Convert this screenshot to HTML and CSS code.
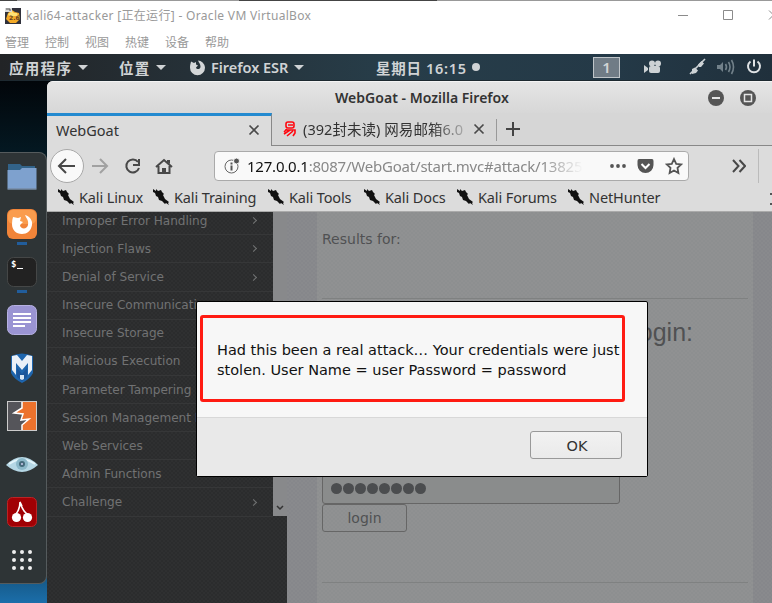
FILE: index.html
```html
<!DOCTYPE html>
<html lang="zh-CN">
<head>
<meta charset="utf-8">
<title>kali64-attacker</title>
<link rel="stylesheet" href="styles.css">
</head>
<body>
<svg width="0" height="0" class="defs">
  <symbol id="kali" viewBox="0 0 18 18"><path d="M1 1l3 2V1l2 2 3-1 1 2 2 2-1 1 2 4 4 3-1 1 1 2-3-2-1 1-3-3-3-1-1-3-2-1-1-3-2-1z" fill="#111"/></symbol>
  <symbol id="close" viewBox="0 0 12 12"><path d="M1.500 1.500l9 9M10.500 1.500l-9 9" stroke="#4a4a4a" stroke-width="1.700" fill="none"/></symbol>
</svg>
<div class="screen">
  <div class="behind"></div>
  <header class="vm-title">
    <svg class="vm-icon" width="16" height="16" viewBox="0 0 16 16"><rect width="16" height="16" fill="#30313b"/><path d="M3 5l4-3 3 2 4 1 1 6-4 4H5l-4-4z" fill="#f3aa28"/><path d="M3 6l4-3 2 2 3 0 1 3H4z" fill="#ffe174"/><path d="M0 0h7v4H0z" fill="#d9d9d9"/><path d="M1 1h4v2" stroke="#555" fill="none"/><text x="4" y="12" class="vm-num">2.6</text></svg>
    <span class="vm-name">kali64-attacker [正在运行] - Oracle VM VirtualBox</span>
    <svg class="vm-ctl" width="100" height="16" viewBox="0 0 100 16"><path d="M6 7.500h10M51.500 2.500h9v9h-9zM97 2.500l9 9M97 11.500l9-9" stroke="#8b8b8b" fill="none"/></svg>
  </header>
  <nav class="vm-menu"><span>管理</span><span>控制</span><span>视图</span><span>热键</span><span>设备</span><span>帮助</span></nav>
  <div class="panel">
    <span class="p-apps">应用程序</span><i class="caret"></i>
    <span class="p-places">位置</span><i class="caret"></i>
    <svg class="p-fox" width="17" height="17" viewBox="0 0 17 17"><path d="M2 2.500l3 1.500 2-1 0 2.500 2 1-2 2c.5 2.500 4.500 2 4.500-.8C11.500 5 10 4 9 1.500c3 .2 7 3 7 7.300a7.500 7.500 0 0 1-15 0C1 6 1.500 5 2 2.500z" fill="#d3d6d8"/></svg>
    <span class="p-esr">Firefox ESR</span><i class="caret"></i>
    <span class="p-clock">星期日 16:15</span><i class="dot"></i>
    <span class="workspace">1</span>
    <svg class="tray" width="124" height="20" viewBox="0 0 124 20">
      <g fill="#cdd2d5"><circle cx="8" cy="6.500" r="3"/><circle cx="14" cy="6.500" r="3"/><rect x="5" y="9" width="11" height="7" rx="2"/><path d="M0 8l4 3v2l-4 3z"/><path d="M46 17l15-15" stroke="#cdd2d5" stroke-width="1.600"/><path d="M48 12l3-1.500 3 3-2 2.500-4 1zM54 7.500l3.500-3.500 2.500 2.500-3 3.500-2 0z"/></g>
      <g fill="none" stroke="#72818a" stroke-width="1.600"><path d="M81.500 7q2 3 0 6M84.500 5q3 5 0 10M87.500 3q4 7 0 14"/><path d="M73 8h3l3-3v10l-3-3h-3z" fill="#72818a" stroke="none"/></g>
      <g fill="none" stroke="#e0e3e5" stroke-width="2"><path d="M106.500 4.500a6 6 0 1 0 7 0M110 2.500v7"/></g>
    </svg>
  </div>
  <main class="desktop">
    <aside class="dock">
      <svg width="30" height="30" viewBox="0 0 30 30"><path d="M1 3h12l2 2h13v5H1z" fill="#326389"/><path d="M1 9h12l2-2h14.500v20.500H.5V9z" fill="#7ea1ce"/><path d="M.5 28h29" stroke="#9ab7dc"/></svg>
      <svg width="30" height="30" viewBox="0 0 30 30"><rect width="30" height="30" rx="6" fill="#f18439"/><rect x="1" y="1" width="28" height="14" rx="5" fill="#fa9c4d"/><path d="M6 8l5 1 3-1-1 4 3 1-3 3c0 4 7 5 8 0 1-5-2-7-3-10 4 1 8 5 7 10-1 6-5 9-10 9-6 0-10-4-10-10q0-4 1-7z" fill="#fff"/><path d="M10 34.500h10" stroke="#215d9c" stroke-width="3"/></svg>
      <svg width="30" height="30" viewBox="0 0 30 30"><rect x=".5" y=".5" width="29" height="29" rx="6" fill="#222" stroke="#454747"/><text x="4" y="10" class="term-mark">$</text><path d="M10 11.500h6" stroke="#fff"/><path d="M10 34.500h10" stroke="#215d9c" stroke-width="3"/></svg>
      <svg width="30" height="30" viewBox="0 0 30 30"><rect x=".5" y=".5" width="29" height="29" rx="6" fill="#9a94d3" stroke="#b6b1e2"/><path d="M6 9h18M6 13h18M6 17h18M6 21h12" stroke="#fff" stroke-width="2"/></svg>
      <svg width="30" height="30" viewBox="0 0 30 30"><path d="M4 3q11-5 22 0v17q-3 6-11 10Q7 26 4 20z" fill="#1e65ad"/><path d="M5 3l5-1 5 6 5-6 5 1v14l-4 5V10l-6 7-6-7v12l-4-5z" fill="#eaf0f8"/><path d="M10 15l5 6 5-6v9l-5 4-5-4z" fill="#1b559a"/><path d="M13 22h4v4l-2 1-2-1z" fill="#d7e6f5"/></svg>
      <svg width="30" height="30" viewBox="0 0 30 30"><rect x=".5" y=".5" width="29" height="29" fill="#55555a"/><path d="M15 1h14v28H15v-5l7-6-8 1 2-6-9-1 8-5z" fill="#ec722d"/><path d="M15 1v6L7 12l9 1-2 6 8-1-7 6v5" fill="none" stroke="#fff" stroke-width="1.500"/><rect x=".5" y=".5" width="29" height="29" fill="none" stroke="#ccc"/></svg>
      <svg width="32" height="30" viewBox="0 0 32 30"><path d="M0 16Q8 8 16 8t16 8q-8 7-16 7T0 16z" fill="#b5d7e5"/><path d="M3 15q13-9 26 0" stroke="#e3f4fa" stroke-width="2" fill="none"/><circle cx="16" cy="15" r="6" fill="#8bb8c9"/><circle cx="16" cy="15" r="3" fill="#456a7c"/><circle cx="16" cy="15" r="1" fill="#cce"/></svg>
      <svg width="30" height="30" viewBox="0 0 30 30"><rect x=".5" y=".5" width="29" height="29" rx="5" fill="#a10004" stroke="#bb2426"/><circle cx="9.500" cy="20.500" r="4.600" fill="#fff"/><circle cx="20.500" cy="20.500" r="4.600" fill="#fff"/><path d="M9 17q4-5 4-12 2 8 7 12M13 5l2 4" stroke="#fff" stroke-width="1.600" fill="none"/></svg>
      <svg width="30" height="30" viewBox="0 0 30 30"><g fill="#eee"><circle cx="7" cy="7" r="2"/><circle cx="15" cy="7" r="2"/><circle cx="23" cy="7" r="2"/><circle cx="7" cy="15" r="2"/><circle cx="15" cy="15" r="2"/><circle cx="23" cy="15" r="2"/><circle cx="7" cy="23" r="2"/><circle cx="15" cy="23" r="2"/><circle cx="23" cy="23" r="2"/></g></svg>
    </aside>
    <section class="firefox">
      <div class="ff-title"><b>WebGoat - Mozilla Firefox</b>
        <svg width="48" height="16" viewBox="0 0 48 16"><circle cx="8" cy="8" r="8" fill="#555"/><path d="M4 8h8" stroke="#e5e5e5" stroke-width="2"/><circle cx="40" cy="8" r="8" fill="#555"/><path d="M36.500 4.500h7v7h-7z" stroke="#e5e5e5" stroke-width="1.500" fill="none"/></svg>
      </div>
      <div class="tabs">
        <div class="tab active"><span>WebGoat</span><svg width="12" height="12"><use href="#close"/></svg></div>
        <div class="tab other"><svg class="fav" width="14" height="16" viewBox="0 0 14 16"><g fill="none" stroke="#ff0810" stroke-width="1.600"><rect x="3" y="1" width="8" height="6" rx="2"/><path d="M5 4h5M2 9h10v3l-2 3M7 9l-6 4M10 10l-6 5M4 8l-3 3"/></g></svg><span class="mail">(392封未读) 网易邮箱6.0</span><svg width="12" height="12"><use href="#close"/></svg></div>
        <div class="newtab"><svg width="14" height="14" viewBox="0 0 14 14"><path d="M7 0v14M0 7h14" stroke="#444" stroke-width="2"/></svg></div>
      </div>
      <div class="nav">
        <svg class="nav-icons" width="167" height="40" viewBox="0 0 167 40"><circle cx="20" cy="20" r="16.500" fill="#f9f9f9" stroke="#a8a8a8"/><g fill="none" stroke="#484848" stroke-width="2"><path d="M28 20H13M19 13l-7 7 7 7"/><path d="M45 20h15M53 13l7 7-7 7" stroke="#a1a1a1"/><path d="M91 16a6.500 6.500 0 1 0 1 6M92 13v6h-6"/><path d="M109 21l8-7 8 7M111.500 20v7h11v-7"/></g><path d="M115 27v-5h4v5" fill="#484848"/><path d="M120 14h3v4l-3-2z" fill="#484848"/></svg>
        <div class="url">
          <svg width="17" height="18" viewBox="0 0 17 18"><circle cx="7.500" cy="9.500" r="6.500" fill="none" stroke="#666"/><path d="M7.500 8.500v5M7.500 5.500v2" stroke="#555" stroke-width="2"/><circle cx="12.500" cy="4" r="3" fill="#555" stroke="#f9f9f9"/></svg>
          <span class="address"><em>127.0.0.1</em>:8087/WebGoat/start.mvc#attack/13825</span>
          <svg class="url-icons" width="76" height="18" viewBox="0 0 76 18"><g fill="#555"><circle cx="3" cy="9" r="1.900"/><circle cx="9" cy="9" r="1.900"/><circle cx="15" cy="9" r="1.900"/><path d="M29 2h14q1.500 0 1.500 2v4a8 8 0 0 1-16 0V4q0-2 1.500-2z"/></g><path d="M32.500 7l4 4 4-4" stroke="#fff" stroke-width="2" fill="none"/><path d="M65 2l2.200 4.800 5 .6-3.700 3.500.9 5.100-4.400-2.500-4.400 2.500.9-5.100-3.700-3.500 5-.6z" stroke="#555" stroke-width="1.800" fill="none"/></svg>
        </div>
        <svg class="more" width="14" height="14" viewBox="0 0 14 14"><path d="M1 1l5.500 6L1 13M7.500 1l5.500 6-5.500 6" fill="none" stroke="#484848" stroke-width="2"/></svg>
        <i class="divider"></i>
      </div>
      <div class="bookmarks">
        <span class="w1"><svg><use href="#kali"/></svg>Kali Linux</span><span class="w2"><svg><use href="#kali"/></svg>Kali Training</span><span class="w3"><svg><use href="#kali"/></svg>Kali Tools</span><span class="w4"><svg><use href="#kali"/></svg>Kali Docs</span><span class="w5"><svg><use href="#kali"/></svg>Kali Forums</span><span class="w6"><svg><use href="#kali"/></svg>NetHunter</span>
        <b class="overflow"></b>
      </div>
      <div class="page">
        <div class="sidebar">
          <div class="lessons">
            <div>Improper Error Handling<i></i></div><div>Injection Flaws<i></i></div><div>Denial of Service<i></i></div><div>Insecure Communication<i></i></div><div>Insecure Storage<i></i></div><div>Malicious Execution<i></i></div><div>Parameter Tampering<i></i></div><div>Session Management Flaws<i></i></div><div>Web Services<i></i></div><div>Admin Functions<i></i></div><div>Challenge<i></i></div>
          </div>
          <div class="scroll"><svg width="8" height="6" viewBox="0 0 8 6"><path d="M1 1l3 3 3-3" stroke="#333" stroke-width="1.500" fill="none"/></svg></div>
        </div>
        <div class="content">
          <p>Results for:</p>
          <hr>
          <h2>login:</h2>
          <div class="password"><i></i><i></i><i></i><i></i><i></i><i></i><i></i><i></i></div>
          <button class="login">login</button>
          <hr class="second">
        </div>
      </div>
    </section>
  </main>
  <div class="dialog">
    <div class="message"><div class="highlight">Had this been a real attack… Your credentials were just<br><span>stolen. User Name = user Password = password</span></div></div>
    <div class="actions"><button>OK</button></div>
  </div>
</div>
</body>
</html>
```
FILE: styles.css
```css
* { box-sizing: border-box; }
body { margin: 0; }
svg { display: block; flex: none; }
.defs { position: absolute; }
.screen { position: relative; width: 772px; height: 603px; overflow: hidden; background: #fff; font-family: "Noto Sans", "Noto Sans CJK SC", sans-serif; white-space: nowrap; }
.behind { height: 1px; background: linear-gradient(90deg, #444 17px, #999 17px 239px, #444 239px 437px, #999 437px); }
.vm-title { height: 29px; display: flex; align-items: center; padding-left: 5px; }
.vm-num { font: bold 6px "DejaVu Sans", sans-serif; fill: #613d22; }
.vm-name { margin-left: 5px; font-size: 12px; color: #999; letter-spacing: .32px; padding-bottom: 1px; }
.vm-ctl { margin-left: auto; }
.vm-menu { height: 24px; display: flex; padding: 0 5px; font: 12px/24px "Noto Sans CJK SC", sans-serif; color: #999; }
.vm-menu span { width: 40px; }
.panel { height: 27px; display: flex; align-items: center; padding-left: 9px; background: linear-gradient(90deg, #222426, #253037 24%, #273d49 50%, #243947 80%, #20303c); color: #d0d3d5; font-size: 15px; font-weight: 600; border-bottom: 1px solid #1d2930; }
.caret { width: 0; border: 5px solid transparent; border-top-color: #d0d3d5; border-bottom: 0; }
.p-apps { width: 69px; }
.p-places { width: 37px; margin-left: 31px; }
.p-apps, .p-places { font-size: 14.5px; letter-spacing: 1.3px; }
.p-fox { margin-left: 23px; }
.p-esr { width: 83px; margin-left: 5px; font-size: 14.5px; letter-spacing: -.05px; }
.p-clock { width: 94px; margin-left: 72px; font-size: 14.500px; letter-spacing: .7px; }
.dot { width: 8px; height: 8px; border-radius: 50%; background: #d0d3d5; margin-left: 2px; }
.workspace { width: 27px; height: 21px; margin-left: 113px; border: 1px solid #bfc5c9; background: #707c86; text-align: center; line-height: 19px; }
.tray { margin-left: 24px; }
.desktop { height: 522px; display: flex; background: linear-gradient(#02060a, #041923 75px, #14527c 490px, #1b6eaa); }
.dock { flex: none; width: 47px; height: 432px; margin-top: 71px; padding-top: 8px; background: #2e3436; border: 1px solid #555b5d; border-left: 0; border-radius: 0 8px 8px 0; display: flex; flex-direction: column; align-items: center; gap: 18px; padding-right: 2px; }
.dock svg { overflow: visible; }
.term-mark { font: bold 9px "DejaVu Sans Mono", monospace; fill: #fff; }
.firefox { width: 725px; display: flex; flex-direction: column; background: #dcdcdc; border-radius: 6px 0 0 0; overflow: hidden; color: #333; }
.ff-title { height: 32px; display: flex; align-items: center; background: linear-gradient(#e5e5e5, #d7d7d7); border-top: 1px solid #f4f4f4; padding-left: 288px; font-size: 14px; }
.ff-title b { width: 373px; padding-bottom: 1px; letter-spacing: .02px; font-weight: 600; }
.tabs { height: 33px; display: flex; background: #d6d6d6; font-size: 14.500px; }
.tab { display: flex; align-items: center; padding-bottom: 3px; }
.active { width: 225px; background: #dcdcdc; border-top: 3px solid #238ad0; border-right: 1px solid #888; padding: 0 11px 3px 9px; justify-content: space-between; }
.other { width: 225px; padding: 0 0 1px 11px; border-bottom: 1px solid #888; background: linear-gradient(#999, #999) right 6px / 1px 22px no-repeat; }
.mail { width: 164px; margin: 0 6px 0 6px; letter-spacing: .05px; mask: linear-gradient(90deg, #000 78%, #0004 98%); }
.newtab { width: 275px; padding: 9px; border-bottom: 1px solid #888; }
.nav { height: 41px; display: flex; align-items: center; padding-bottom: 1px; }
.url { width: 475px; height: 30px; background: #f9f9f9; border: 1px solid #aaa; border-radius: 4px; display: flex; align-items: center; padding-left: 9px; }
.address { color: #888; font-size: 15px; letter-spacing: -.21px; width: 350px; margin-left: 6px; mask: linear-gradient(90deg, #000 84%, transparent 96%); }
.address em { color: #111; font-style: normal; }
.url-icons { margin-left: 12px; }
.more { margin-left: 43px; }
.divider { width: 1px; height: 34px; margin-left: 12px; background: #bbb; }
.bookmarks { height: 25px; display: flex; align-items: center; padding-left: 10px; font-size: 14.500px; border-bottom: 1px solid #aaa; letter-spacing: -.12px; }
.bookmarks span { display: flex; align-items: center; gap: 4px; padding-bottom: 4px; }
.bookmarks svg { width: 18px; height: 18px; }
.w1 { width: 95px; } .w2 { width: 115px; } .w3 { width: 96px; } .w4 { width: 93px; } .w5 { width: 111px; }
.overflow { width: 2px; height: 12px; margin-left: auto; border: solid #555; border-width: 2px 0; }
.page { flex: 1; display: flex; background: repeating-conic-gradient(#86878b 0 25%, #898a8d 0 50%) 0 0 / 4px 4px; font-family: "DejaVu Sans", sans-serif; }
.sidebar { width: 240px; height: 391px; display: flex; align-items: flex-start; background: repeating-conic-gradient(#2b2c2d 0 25%, #2f3031 0 50%) 0 0 / 4px 4px; }
.lessons { width: 226px; font-size: 12.100px; letter-spacing: -.04px; color: #717273; margin-top: -4.800px; }
.lessons div { display: flex; align-items: center; justify-content: space-between; height: 28.140px; padding: 0 17px 0 15px; border-bottom: 1px solid #363738; }
.lessons i { width: 5px; height: 5px; border: solid #717273; border-width: 1px 1px 0 0; transform: rotate(45deg); }
.scroll { width: 14px; height: 304px; padding: 293px 3px 0; background: #88898b; }
.content { width: 436px; height: 391px; margin-left: 30px; padding: 0 5px; background: repeating-conic-gradient(#8d8f90 0 25%, #909192 0 50%) 0 0 / 4px 4px; color: #505153; display: flex; flex-direction: column; align-items: flex-start; }
.content p { margin: 18px 0 0; font-size: 14px; line-height: 18px; height: 68px; }
hr { width: 100%; height: 1px; border: 0; background: #7f8181; margin: 0; }
.content h2 { width: 371px; margin: 19px 0 0; text-align: right; font: 25px/28px "Liberation Sans", sans-serif; }
.password { width: 298px; height: 32px; margin-top: 126px; border: 1px solid #666; border-radius: 3px; display: flex; align-items: center; padding-left: 8px; gap: 1px; background: #8a8c8c; }
.password i { width: 11px; height: 11px; border-radius: 50%; background: #4b4d4f; }
.login { width: 85px; height: 28px; border: 1px solid #666; border-radius: 3px; background: transparent; font: 14px "DejaVu Sans", sans-serif; color: #505153; }
.second { margin-top: 50px; }
.dialog { position: absolute; left: 196px; top: 301px; width: 452px; height: 176px; border: 1px solid #000; border-radius: 2px; background: #f7f7f7; color: #111; font: 14.500px/20px "DejaVu Sans", sans-serif; }
.message { height: 115px; padding: 13px 3px; }
.highlight { width: 425px; height: 87px; padding: 22px 0 0 14px; border: 3px solid #ff1b12; border-radius: 3px; }
.actions { height: 59px; padding: 13px 25px; border-top: 1px solid #d8d8d8; background: #e9e9e9; text-align: right; }
.actions button { width: 92px; height: 28px; padding: 2px 5px 0 7px; border: 1px solid #999; border-radius: 3px; background: linear-gradient(#f2f2f2, #eaeaea); color: #333; font: 14.500px "DejaVu Sans", sans-serif; }
```
